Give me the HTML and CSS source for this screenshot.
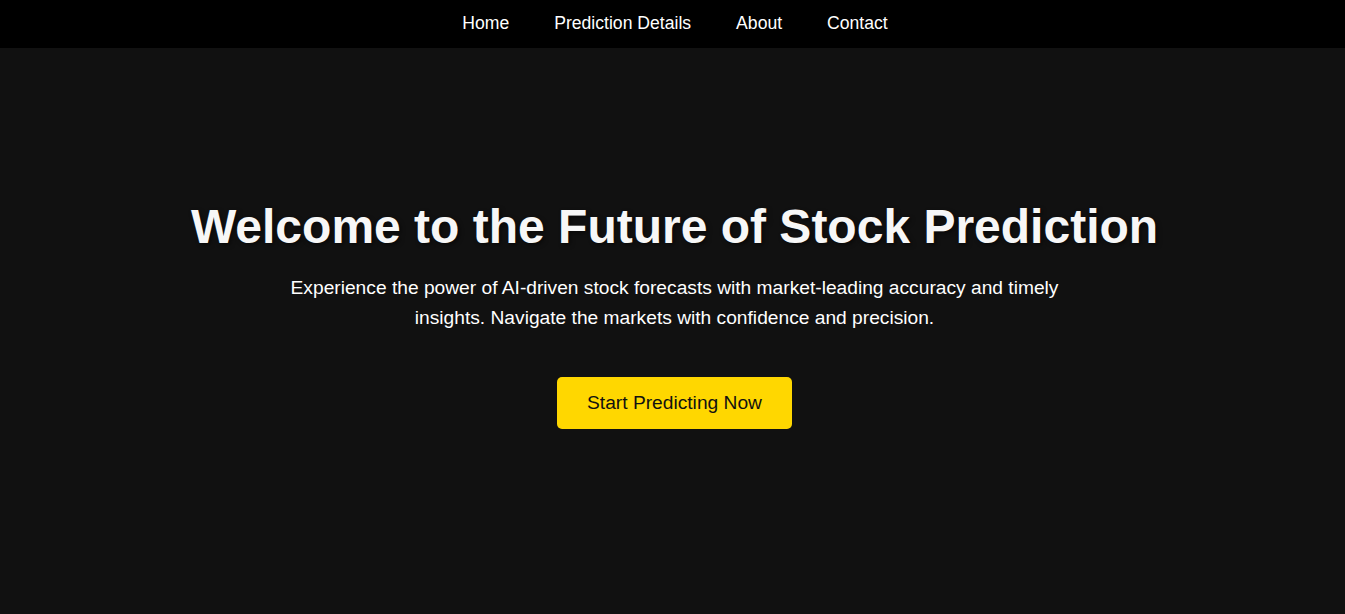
FILE: index.html
```html
<!DOCTYPE html>
<html lang="en">
<head>
<meta charset="utf-8">
<title>Stock Prediction</title>
<link rel="stylesheet" href="styles.css">
</head>
<body>
<nav class="nav">
  <a class="nav-link" href="#">Home</a>
  <a class="nav-link" href="#">Prediction Details</a>
  <a class="nav-link" href="#">About</a>
  <a class="nav-link" href="#">Contact</a>
</nav>
<main class="hero">
  <h1 class="hero-title">Welcome to the Future of Stock Prediction</h1>
  <p class="hero-text">Experience the power of AI-driven stock forecasts with market-leading accuracy and timely insights. Navigate the markets with confidence and precision.</p>
  <a class="hero-btn" href="#">Start Predicting Now</a>
</main>
</body>
</html>
```
FILE: styles.css
```css
* { box-sizing: border-box; }
html, body { margin: 0; padding: 0; }
body {
  background: #111111;
  color: #f5f5f5;
  font-family: "Liberation Sans", Arial, sans-serif;
  height: 614px;
  overflow: hidden;
}
.nav {
  background: #000000;
  height: 48px;
  display: flex;
  justify-content: center;
  align-items: center;
  gap: 45px;
  padding-left: 5px;
  padding-bottom: 2px;
}
.nav-link {
  color: #ffffff;
  text-decoration: none;
  font-size: 17.6px;
}
.hero {
  display: flex;
  flex-direction: column;
  align-items: center;
  text-align: center;
  padding-top: 150px;
  padding-left: 4px;
}
.hero-title {
  margin: 0;
  font-size: 48px;
  font-weight: bold;
  color: #f7f7f7;
  text-shadow: 2px 2px 4px rgba(0, 0, 0, 0.5);
  line-height: 1.2;
}
.hero-text {
  margin: 17px 0 0;
  max-width: 800px;
  font-size: 19.2px;
  line-height: 30px;
  color: #ffffff;
}
.hero-btn {
  margin-top: 44px;
  display: inline-block;
  background: #ffd700;
  color: #111111;
  text-decoration: none;
  font-size: 19.2px;
  padding: 15px 30px;
  border-radius: 5px;
}
```
